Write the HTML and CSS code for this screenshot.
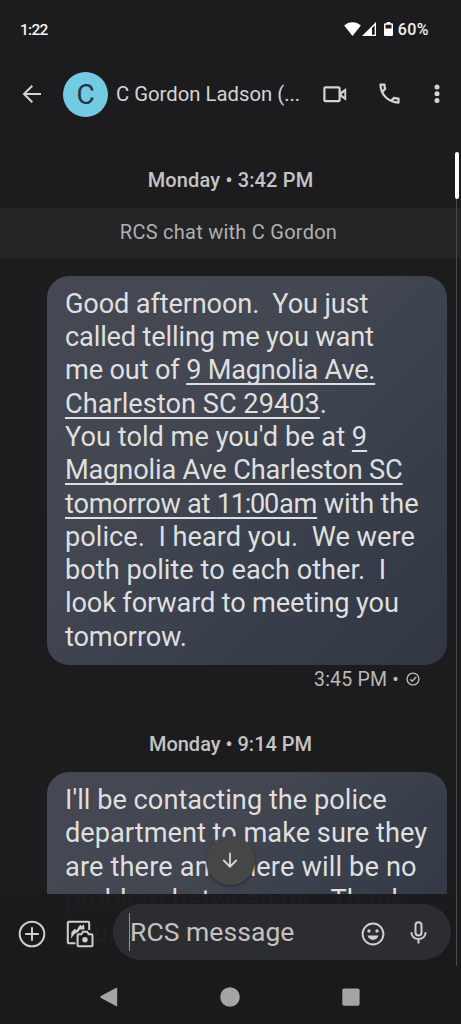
FILE: index.html
```html
<!DOCTYPE html>
<html lang="en">
<head>
<meta charset="utf-8">
<title>Messages</title>
<link rel="stylesheet" href="styles.css">
</head>
<body>
<div class="screen">
  <header class="status">
    <span class="clock">1:22</span>
    <div class="indicators">
      <svg class="wifi" viewBox="0 0 17 14"><path d="M8.5 14 .2 3.6C2.400 1.500 5.300.3 8.500.3s6.100 1.200 8.300 3.300z"/></svg>
      <svg class="signal" viewBox="0 0 14 14"><path fill-rule="evenodd" d="M14 0v14H0zM12.700 3.400 10 6.100v6.600h2.700z"/></svg>
      <svg class="battery" viewBox="0 0 9 14"><path fill-rule="evenodd" d="M2.700 0h3.600v1.300h1.500q1.200 0 1.200 1.200v10.300q0 1.200-1.200 1.200H1.200Q0 14 0 12.800V2.500q0-1.200 1.200-1.200h1.500zM1.500 2.800v3.700h6V2.800z"/></svg>
      <span class="percent">60%</span>
    </div>
  </header>

  <div class="appbar">
    <svg class="back" viewBox="0 0 20 20"><path d="M19 10H2.500M10.300 1.700 2 10l8.300 8.300"/></svg>
    <div class="avatar">C</div>
    <h1 class="title">C Gordon Ladson (...</h1>
    <svg class="video" viewBox="0 0 24 17"><rect x="1.400" y="1.400" width="15.200" height="13.800" rx="1"/><path class="lens" d="M16.500 6.700 23.200 2v12.800L16.500 10z"/><path class="cut" d="M18.500 8.400 21.300 6v4.800z"/></svg>
    <svg class="phone" viewBox="0 0 24 24"><path d="M6.540 5c.06.890.21 1.760.45 2.590l-1.200 1.200c-.41-1.200-.67-2.470-.76-3.790h1.510m9.860 12.020c.85.240 1.720.390 2.600.450v1.490c-1.320-.09-2.590-.35-3.800-.75l1.200-1.190M7.500 3H4c-.55 0-1 .45-1 1 0 9.390 7.610 17 17 17 .55 0 1-.45 1-1v-3.490c0-.55-.45-1-1-1-1.240 0-2.450-.2-3.570-.57-.1-.04-.21-.05-.31-.05-.26 0-.51.1-.71.290l-2.200 2.200c-2.830-1.450-5.150-3.760-6.590-6.590l2.200-2.200c.28-.28.360-.67.250-1.020C8.700 6.450 8.500 5.250 8.500 4c0-.55-.45-1-1-1z"/></svg>
    <svg class="more" viewBox="0 0 6 20"><circle cx="3" cy="3" r="2.500"/><circle cx="3" cy="9.800" r="2.500"/><circle cx="3" cy="16.600" r="2.500"/></svg>
  </div>

  <main class="thread">
    <div class="date first">Monday • 3:42 PM</div>
    <div class="notice">RCS chat with C Gordon</div>
    <div class="bubble one">
      <span class="line s1">Good afternoon.  You just</span>
      <span class="line s1">called telling me you want</span>
      <span class="line s1">me out of <u class="snug">9 Magnolia Ave.</u></span>
      <span class="line s2"><u>Charleston SC 29403</u>.</span>
      <span class="line s2">You told me you'd be at <u>9</u></span>
      <span class="line s1"><u>Magnolia Ave Charleston SC</u></span>
      <span class="line s1"><u class="snug">tomorrow at <span class="tight">11:0</span>0am</u> with the</span>
      <span class="line s2">police.  I heard you.  We were</span>
      <span class="line s2">both polite to each other.  I</span>
      <span class="line s1">look forward to meeting you</span>
      <span class="line s1">tomorrow.</span>
    </div>
    <div class="receipt">
      <span>3:45 PM •</span>
      <svg class="check" viewBox="0 0 14 14"><circle cx="7" cy="7" r="5.900"/><path d="m4.200 7.200 2 2 4-4.300"/></svg>
    </div>
    <div class="date second">Monday • 9:14 PM</div>
    <div class="bubble two">
      <span class="line s2">I'll be contacting the police</span>
      <span class="line s2">department to make sure they</span>
      <span class="line s3">are there and there will be no</span>
      <span class="line s2">problem between us.  Thank</span>
      <span class="line s2">you.</span>
    </div>
  </main>

  <div class="jump"><svg viewBox="0 0 18 18"><path d="M9 1.800v13.500M2.300 9 9 15.700 15.700 9"/></svg></div>

  <footer class="composer">
    <div class="entry">
      <svg class="plus" viewBox="0 0 28 28"><circle cx="14" cy="14" r="12.300"/><path d="M14 7.200v13.600M7.200 14h13.600"/></svg>
      <svg class="gallery" viewBox="0 0 28 28"><path d="M9.500 23.200H2.800q-1 0-1-1V2.800q0-1 1-1h19.400q1 0 1 1V10"/><path class="solid" d="M5 18.500 5.500 12l3.200-3.300 1.800 1.500 3.800-5.700 1.400 1.700 2.300-2 .5 5.300h-4.600L12.200 12 8.500 14z"/><path d="M11.600 15.200q0-1 1-1h2.800l1.500-2.400h4.300l1.500 2.400h2.800q1 0 1 1v10q0 1-1 1H12.600q-1 0-1-1z"/><circle class="solid" cx="19" cy="19.800" r="2.700"/></svg>
      <div class="field">
        <span class="placeholder">RCS message</span>
        <svg class="smile" viewBox="0 0 24 24"><circle cx="12" cy="12" r="10.400"/><circle class="solid" cx="8" cy="9" r="1.700"/><circle class="solid" cx="16" cy="9" r="1.700"/><path class="solid" d="M6.500 13.600h11c-.8 2.700-2.900 4.400-5.500 4.400s-4.700-1.700-5.500-4.400z"/></svg>
        <svg class="mic" viewBox="0 0 17 23"><rect x="5.500" y="1.300" width="6" height="13.200" rx="3"/><path d="M1.400 11.300c0 4 3.200 6.700 7.100 6.700s7.100-2.700 7.100-6.700M8.500 18v4.500"/></svg>
      </div>
    </div>
    <nav class="nav">
      <svg viewBox="0 0 20 20"><path d="M18.200 1.700v16.600q0 1.300-1.300.7L1.900 11.100q-1.600-1.100 0-2.200L16.900 1q1.300-.6 1.300.7z"/></svg>
      <svg viewBox="0 0 20 20"><circle cx="10" cy="10" r="9.800"/></svg>
      <svg viewBox="0 0 20 20"><rect x="1.300" y="1.500" width="17.300" height="17.300" rx="1.800"/></svg>
    </nav>
  </footer>
  <div class="track"><div class="thumb"></div></div>
</div>
</body>
</html>
```
FILE: styles.css
```css
* { box-sizing: border-box; }
body { margin: 0; background: #1c1c1e; }
svg { display: block; flex: none; overflow: visible; }

.screen {
  position: relative;
  display: flex;
  flex-direction: column;
  width: 461px;
  height: 1024px;
  overflow: hidden;
  background: #1c1c1e;
  color: #c9c9ca;
  font-family: Roboto, "Liberation Sans", sans-serif;
}

/* Status bar */
.status {
  display: flex;
  align-items: center;
  justify-content: space-between;
  height: 58px;
  padding: 0 31px 0 20px;
  color: #fff;
  font-size: 15.500px;
  font-weight: 500;
  line-height: 20px;
}
.clock { padding-top: 1px; letter-spacing: -.75px; color: #f1f1f1; }
.indicators { display: flex; align-items: center; fill: #fff; }
.wifi { width: 17px; height: 14px; }
.signal { width: 14px; height: 14px; margin-left: 1px; }
.battery { width: 9px; height: 14px; margin: 0 5px 0 8px; }
.percent { padding-top: 1px; color: #f1f1f1; font-size: 16px; letter-spacing: .4px; margin-right: 1px; }

/* Conversation header */
.appbar {
  display: flex;
  align-items: center;
  height: 72px;
  padding-left: 22px;
}
.appbar svg { fill: none; stroke: #d4d4d5; stroke-width: 2; }
.back { width: 20px; height: 20px; }
.avatar {
  flex: none;
  width: 45px;
  height: 45px;
  margin-left: 21px;
  border-radius: 50%;
  background: #73cae3;
  color: #24363c;
  font-size: 28px;
  line-height: 45px;
  text-align: center;
}
.title {
  width: 200px;
  margin: 0 0 0 8px;
  font-size: 20.300px;
  font-weight: 400;
  line-height: 28px;
  white-space: pre;
  color: #d4d4d5;
}
.video { width: 24px; height: 17px; margin-left: 7px; }
.appbar .video { stroke-width: 2.200; }
.appbar .lens { fill: #d4d4d5; stroke: none; }
.appbar .cut { fill: #1c1c1e; stroke: none; }
.phone { width: 27px; height: 27px; margin: -2px 0 0 29px; }
.more { width: 6px; height: 20px; margin-left: 30.500px; }
.appbar .phone, .appbar .more { fill: #d4d4d5; stroke: none; }

/* Messages */
.thread { display: flex; flex-direction: column; flex: none; }
.date {
  font-size: 20px;
  font-weight: 500;
  line-height: 28px;
  letter-spacing: .15px;
  text-align: center;
  color: #c4c4c4;
}
.date.first { padding: 36px 0 14px; }
.date.second { margin-top: 36.500px; letter-spacing: 0; }
.notice {
  height: 50px;
  padding: 0 4px 0 0;
  background: #242426;
  font-size: 20px;
  line-height: 49px;
  letter-spacing: .25px;
  text-align: center;
  color: #b0b0b2;
}
.bubble {
  display: flex;
  flex-direction: column;
  width: 400px;
  margin-left: 47px;
  padding: 12.300px 18px 10.700px;
  border-radius: 22px;
  background: linear-gradient(135deg, #454852 0%, #434751 35%, #39404c 66%, #303742 100%);
  color: #dfdfdf;
  font-size: 27.200px;
  line-height: 33.300px;
}
.bubble.one { margin-top: 17.500px; }
.bubble.two { margin-top: 13.500px; }
.line { white-space: pre; }
.line.s1 { letter-spacing: -.16px; }
.line.s2 { letter-spacing: .01px; }
.line.s3 { letter-spacing: .14px; }
.snug { letter-spacing: -.25px; }
.tight { letter-spacing: -1.300px; }
u {
  text-decoration-thickness: 2px;
  text-underline-offset: 4px;
  text-decoration-skip-ink: none;
}
.receipt {
  display: flex;
  align-items: center;
  justify-content: flex-end;
  gap: 7px;
  height: 29px;
  padding: 1px 41px 0 0;
  font-size: 19.500px;
  letter-spacing: .2px;
  color: #b9b9b9;
}
.check { width: 14px; height: 14px; margin-top: -1px; fill: none; stroke: #b9b9b9; stroke-width: 1.400; }

/* Scroll-to-latest button */
.jump {
  position: absolute;
  z-index: 2;
  left: 206px;
  top: 836px;
  display: grid;
  place-items: center;
  width: 49px;
  height: 49px;
  border-radius: 50%;
  background: #464646;
  box-shadow: 0 1px 3px rgba(0, 0, 0, .4);
}
.jump svg { width: 18px; height: 18px; margin: -1px 1px 0 0; fill: none; stroke: #d8d8d8; stroke-width: 1.800; }

/* Composer and system navigation, over the thread */
.composer {
  position: absolute;
  left: 0;
  right: 0;
  bottom: 0;
  height: 130px;
  padding-top: 10px;
  background: rgba(27, 27, 29, .98);
}
.entry { display: flex; align-items: center; height: 56px; padding: 0 10px 0 18px; }
.entry svg { fill: none; stroke: #cfcfcf; stroke-width: 2; }
.entry .solid { fill: #cfcfcf; stroke: none; }
.plus, .gallery { width: 28px; height: 28px; margin-top: 4px; }
.gallery { margin-left: 19.500px; }
.field {
  display: flex;
  align-items: center;
  flex: 1;
  height: 56px;
  margin-left: 19.500px;
  padding: 0 24px 0 16px;
  border-radius: 28px;
  background: #2c2d30;
}
.placeholder {
  flex: 1;
  height: 38px;
  border-left: 1px solid #929294;
  font-size: 26.500px;
  line-height: 37px;
  letter-spacing: .05px;
  color: #c4c1c0;
}
.smile { width: 24px; height: 24px; margin-top: 3px; }
.mic { width: 17px; height: 23px; margin-left: 25px; }
.nav { display: flex; justify-content: center; gap: 101px; padding: 27px 1px 0 0; }
.nav svg { width: 20px; height: 20px; fill: #a4a4a4; }

/* Scrollbar */
.track {
  position: absolute;
  z-index: 3;
  left: 456px;
  top: 152px;
  width: 1px;
  height: 814px;
  background: #4a4a4c;
}
.thumb { width: 4px; height: 47px; margin-left: -1.500px; border-radius: 2px; background: #fff; }
```
